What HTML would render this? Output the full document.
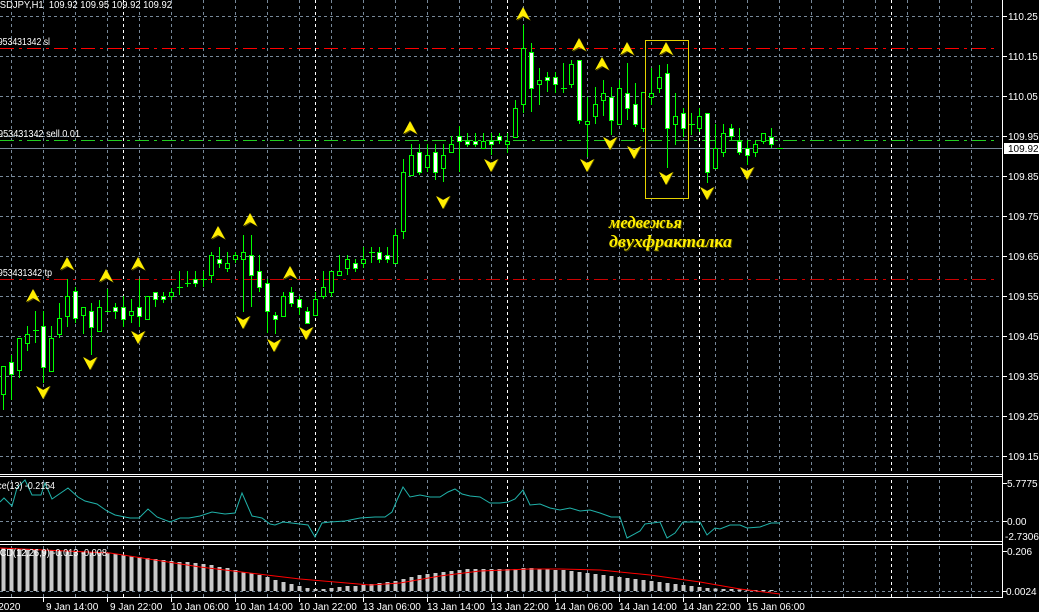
<!DOCTYPE html>
<html><head><meta charset="utf-8"><style>
html,body{margin:0;padding:0;background:#000;width:1039px;height:612px;overflow:hidden}
svg{display:block}
.t{font-family:"Liberation Sans",sans-serif;font-size:10px;fill:#fff}
.h{fill:#000;stroke:#00ff00}
.w{fill:#fff;stroke:#00ff00}
</style></head><body>
<svg width="1039" height="612" viewBox="0 0 1039 612" xmlns="http://www.w3.org/2000/svg">
<defs>
<g id="up"><path d="M1 1L8 14L1 10L-6 14Z" fill="#5a5000"/><path d="M0 0L7 13L0 9L-7 13Z" fill="#ffee00"/></g>
<g id="dn"><path d="M1 13L8 0L1 4L-6 0Z" fill="#5a5000"/><path d="M0 13L7 0L0 4L-7 0Z" fill="#ffee00"/></g>
</defs>
<path d="M11.5 0V597M43.5 0V597M75.5 0V597M107.5 0V597M139.5 0V597M171.5 0V597M203.5 0V597M235.5 0V597M267.5 0V597M299.5 0V597M331.5 0V597M363.5 0V597M395.5 0V597M427.5 0V597M459.5 0V597M491.5 0V597M523.5 0V597M555.5 0V597M587.5 0V597M619.5 0V597M651.5 0V597M683.5 0V597M715.5 0V597M747.5 0V597M779.5 0V597M811.5 0V597M843.5 0V597M875.5 0V597M907.5 0V597M939.5 0V597M971.5 0V597" stroke="#778899" stroke-dasharray="3 3"/>
<path d="M0 16.5H1002M0 56.5H1002M0 96.5H1002M0 136.5H1002M0 176.5H1002M0 216.5H1002M0 256.5H1002M0 296.5H1002M0 336.5H1002M0 376.5H1002M0 416.5H1002M0 456.5H1002M0 521.5H1002M0 591.5H1002" stroke="#778899" stroke-dasharray="3 3"/>
<path d="M123.5 0V597M315.5 0V597M507.5 0V597M699.5 0V597M891.5 0V597" stroke="#fff" stroke-dasharray="3 3"/>
<rect x="0" y="473" width="1003" height="5" fill="#000"/>
<rect x="0" y="541" width="1003" height="4" fill="#000"/>
<path d="M0 474.5H1003M0 476.5H1003M0 541.5H1003M0 544.5H1003M0 597.5H1003M1002.5 0V598" stroke="#fff"/>
<path d="M0 48.5H996" stroke="#ff0000" stroke-dasharray="14 5 3 5"/>
<path d="M0 140.5H996" stroke="#22cc22" stroke-dasharray="14 5 3 5"/>
<path d="M0 279.5H996" stroke="#cc0000" stroke-dasharray="14 5 3 5"/>
<path d="M0 148.5H1002" stroke="#778899"/>
<path stroke="#00ff00" d="M3.5 366V410M11.5 355V400M19.5 338V378M27.5 326V351M35.5 311V343M43.5 311V383M51.5 326V371M59.5 303V338M67.5 279V327M75.5 287V323M83.5 307V334M91.5 303V355M99.5 300V331M107.5 289V311M115.5 303V319M123.5 296V327M131.5 299V323M139.5 279V327M147.5 296V319M155.5 292V307M163.5 292V303M171.5 288V300M179.5 271V295M187.5 271V287M195.5 271V287M203.5 271V287M211.5 252V283M219.5 247V268M227.5 252V272M235.5 252V263M243.5 235V312M251.5 235V307M259.5 255V292M267.5 279V333M275.5 312V334M283.5 292V316M291.5 287V307M299.5 296V315M307.5 307V323M315.5 292V315M323.5 271V299M331.5 271V297M339.5 255V275M347.5 255V275M355.5 259V272M363.5 247V268M371.5 247V263M379.5 247V263M387.5 247V263M395.5 229V263M403.5 159V239M411.5 144V175M419.5 144V175M427.5 144V172M435.5 144V180M443.5 144V182M451.5 136V147M459.5 126V172M467.5 133V147M475.5 133V147M483.5 133V148M491.5 133V155M499.5 133V144M507.5 133V153M515.5 100V137M523.5 25V113M531.5 43V112M539.5 68V105M547.5 72V92M555.5 72V93M563.5 63V93M571.5 60V88M579.5 60V124M587.5 97V157M595.5 87V124M603.5 80V116M611.5 87V135M619.5 80V124M627.5 63V120M635.5 83V127M643.5 92V132M651.5 68V105M659.5 65V93M667.5 64V168M675.5 93V145M683.5 108V137M691.5 113V135M699.5 108V132M707.5 113V183M715.5 124V168M723.5 124V157M731.5 124V140M739.5 128V155M747.5 140V165M755.5 140V157M763.5 133V144M771.5 128V148"/>
<path stroke="#00ff00" d="M33 330.5h6M105 311.5h6M177 287.5h6M185 283.5h6M201 279.5h6M369 252.5h6M561 88.5h6M689 124.5h6M777 148.5h6"/>
<g stroke-width="1">
<rect x="1.5" y="366.5" width="4" height="28" class="h"/><rect x="9.5" y="362.5" width="4" height="12" class="w"/><rect x="17.5" y="338.5" width="4" height="32" class="h"/><rect x="25.5" y="334.5" width="4" height="9" class="h"/><rect x="41.5" y="326.5" width="4" height="41" class="w"/><rect x="49.5" y="338.5" width="4" height="33" class="h"/><rect x="57.5" y="318.5" width="4" height="16" class="h"/><rect x="65.5" y="296.5" width="4" height="20" class="h"/><rect x="73.5" y="291.5" width="4" height="27" class="w"/><rect x="81.5" y="307.5" width="4" height="8" class="h"/><rect x="89.5" y="311.5" width="4" height="16" class="w"/><rect x="97.5" y="307.5" width="4" height="24" class="h"/><rect x="113.5" y="307.5" width="4" height="4" class="w"/><rect x="121.5" y="307.5" width="4" height="12" class="w"/><rect x="129.5" y="311.5" width="4" height="4" class="h"/><rect x="137.5" y="307.5" width="4" height="9" class="w"/><rect x="145.5" y="296.5" width="4" height="23" class="h"/><rect x="153.5" y="292.5" width="4" height="7" class="w"/><rect x="161.5" y="296.5" width="4" height="3" class="w"/><rect x="169.5" y="292.5" width="4" height="4" class="h"/><rect x="193.5" y="279.5" width="4" height="4" class="w"/><rect x="209.5" y="255.5" width="4" height="20" class="h"/><rect x="217.5" y="259.5" width="4" height="4" class="w"/><rect x="225.5" y="263.5" width="4" height="5" class="h"/><rect x="233.5" y="255.5" width="4" height="4" class="h"/><rect x="241.5" y="252.5" width="4" height="7" class="h"/><rect x="249.5" y="255.5" width="4" height="20" class="w"/><rect x="257.5" y="271.5" width="4" height="16" class="w"/><rect x="265.5" y="283.5" width="4" height="28" class="w"/><rect x="273.5" y="315.5" width="4" height="4" class="w"/><rect x="281.5" y="296.5" width="4" height="20" class="h"/><rect x="289.5" y="292.5" width="4" height="11" class="w"/><rect x="297.5" y="299.5" width="4" height="8" class="w"/><rect x="305.5" y="311.5" width="4" height="12" class="w"/><rect x="313.5" y="299.5" width="4" height="16" class="h"/><rect x="321.5" y="287.5" width="4" height="9" class="h"/><rect x="329.5" y="271.5" width="4" height="21" class="h"/><rect x="337.5" y="271.5" width="4" height="4" class="h"/><rect x="345.5" y="259.5" width="4" height="9" class="h"/><rect x="353.5" y="263.5" width="4" height="5" class="w"/><rect x="361.5" y="259.5" width="4" height="4" class="h"/><rect x="377.5" y="252.5" width="4" height="7" class="w"/><rect x="385.5" y="255.5" width="4" height="4" class="w"/><rect x="393.5" y="235.5" width="4" height="28" class="h"/><rect x="401.5" y="172.5" width="4" height="59" class="h"/><rect x="409.5" y="155.5" width="4" height="20" class="h"/><rect x="417.5" y="152.5" width="4" height="20" class="w"/><rect x="425.5" y="155.5" width="4" height="12" class="h"/><rect x="433.5" y="152.5" width="4" height="20" class="w"/><rect x="441.5" y="155.5" width="4" height="13" class="h"/><rect x="449.5" y="144.5" width="4" height="8" class="h"/><rect x="457.5" y="136.5" width="4" height="5" class="w"/><rect x="465.5" y="141.5" width="4" height="3" class="w"/><rect x="473.5" y="141.5" width="4" height="3" class="w"/><rect x="481.5" y="141.5" width="4" height="7" class="h"/><rect x="489.5" y="141.5" width="4" height="3" class="w"/><rect x="497.5" y="136.5" width="4" height="4" class="w"/><rect x="505.5" y="141.5" width="4" height="3" class="h"/><rect x="513.5" y="108.5" width="4" height="29" class="h"/><rect x="521.5" y="48.5" width="4" height="56" class="h"/><rect x="529.5" y="52.5" width="4" height="36" class="w"/><rect x="537.5" y="80.5" width="4" height="4" class="h"/><rect x="545.5" y="77.5" width="4" height="3" class="w"/><rect x="553.5" y="77.5" width="4" height="7" class="w"/><rect x="569.5" y="64.5" width="4" height="20" class="h"/><rect x="577.5" y="60.5" width="4" height="60" class="w"/><rect x="585.5" y="121.5" width="4" height="3" class="h"/><rect x="593.5" y="104.5" width="4" height="12" class="h"/><rect x="601.5" y="93.5" width="4" height="7" class="h"/><rect x="609.5" y="97.5" width="4" height="23" class="w"/><rect x="617.5" y="88.5" width="4" height="36" class="h"/><rect x="625.5" y="93.5" width="4" height="15" class="w"/><rect x="633.5" y="104.5" width="4" height="20" class="w"/><rect x="641.5" y="92.5" width="4" height="36" class="h"/><rect x="649.5" y="93.5" width="4" height="4" class="h"/><rect x="657.5" y="77.5" width="4" height="11" class="h"/><rect x="665.5" y="73.5" width="4" height="55" class="w"/><rect x="673.5" y="116.5" width="4" height="8" class="h"/><rect x="681.5" y="113.5" width="4" height="15" class="w"/><rect x="697.5" y="116.5" width="4" height="12" class="h"/><rect x="705.5" y="113.5" width="4" height="59" class="w"/><rect x="713.5" y="148.5" width="4" height="20" class="h"/><rect x="721.5" y="133.5" width="4" height="19" class="h"/><rect x="729.5" y="128.5" width="4" height="8" class="w"/><rect x="737.5" y="141.5" width="4" height="11" class="w"/><rect x="745.5" y="148.5" width="4" height="7" class="w"/><rect x="753.5" y="144.5" width="4" height="8" class="h"/><rect x="761.5" y="133.5" width="4" height="8" class="h"/><rect x="769.5" y="137.5" width="4" height="7" class="w"/>
</g>
<use href="#up" x="33" y="289"/><use href="#up" x="67" y="257"/><use href="#up" x="106" y="269"/><use href="#up" x="138" y="257"/><use href="#up" x="218" y="226"/><use href="#up" x="250" y="213"/><use href="#up" x="290" y="266"/><use href="#up" x="410" y="121"/><use href="#up" x="523" y="7"/><use href="#up" x="579" y="38"/><use href="#up" x="602" y="57"/><use href="#up" x="627" y="42"/><use href="#up" x="666" y="42"/>
<use href="#dn" x="43" y="386"/><use href="#dn" x="90" y="357"/><use href="#dn" x="138" y="331"/><use href="#dn" x="243" y="316"/><use href="#dn" x="274" y="339"/><use href="#dn" x="306" y="327"/><use href="#dn" x="443" y="196"/><use href="#dn" x="491" y="159"/><use href="#dn" x="587" y="159"/><use href="#dn" x="610" y="137"/><use href="#dn" x="634" y="146"/><use href="#dn" x="666" y="172"/><use href="#dn" x="707" y="187"/><use href="#dn" x="747" y="167"/>
<rect x="645.5" y="40.5" width="43" height="158" fill="none" stroke="#e6d200"/>
<g font-family="Liberation Serif,serif" font-style="italic" font-weight="bold" font-size="17">
<text x="610" y="229" fill="#444000" textLength="73" lengthAdjust="spacingAndGlyphs">медвежья</text>
<text x="609" y="228" fill="#ffee00" textLength="73" lengthAdjust="spacingAndGlyphs">медвежья</text>
<text x="610" y="248" fill="#444000" textLength="123" lengthAdjust="spacingAndGlyphs">двухфракталка</text>
<text x="609" y="247" fill="#ffee00" textLength="123" lengthAdjust="spacingAndGlyphs">двухфракталка</text>
</g>
<text class="t" x="-7" y="8" textLength="179" lengthAdjust="spacingAndGlyphs">USDJPY,H1&#160;&#160;109.92 109.95 109.92 109.92</text>
<text class="t" x="-7" y="45" textLength="57" lengthAdjust="spacingAndGlyphs">#953431342 sl</text>
<text class="t" x="-7" y="137" textLength="87" lengthAdjust="spacingAndGlyphs">#953431342 sell 0.01</text>
<text class="t" x="-7" y="276" textLength="59" lengthAdjust="spacingAndGlyphs">#953431342 tp</text>
<g class="t">
<text class="t" x="1008" y="20">110.25</text><text class="t" x="1008" y="60">110.15</text><text class="t" x="1008" y="100">110.05</text><text class="t" x="1008" y="140">109.95</text><text class="t" x="1008" y="180">109.85</text><text class="t" x="1008" y="220">109.75</text><text class="t" x="1008" y="260">109.65</text><text class="t" x="1008" y="300">109.55</text><text class="t" x="1008" y="340">109.45</text><text class="t" x="1008" y="380">109.35</text><text class="t" x="1008" y="420">109.25</text><text class="t" x="1008" y="460">109.15</text>
</g>
<path d="M1003 16.5h4M1003 56.5h4M1003 96.5h4M1003 136.5h4M1003 176.5h4M1003 216.5h4M1003 256.5h4M1003 296.5h4M1003 336.5h4M1003 376.5h4M1003 416.5h4M1003 456.5h4M1003 483.5h4M1003 521.5h4M1003 551.5h4M1003 591.5h4" stroke="#fff"/>
<rect x="1004" y="143" width="35" height="11" fill="#fff"/>
<text x="1008" y="152" font-family="Liberation Sans,sans-serif" font-size="10" fill="#000">109.92</text>
<polyline fill="none" stroke="#20b2aa" points="0,502 4,498 12,506 17,488 25,480 32,495 41,495 45,483 52,499 68,488 78,497 85,501 97,504 107,511 115,515 130,518 139,518 148,509 157,517 170,522 180,518 189,518 200,516 212,512 225,514 235,513 242,493 252,516 262,518 270,524 275,525 283,522 300,524 308,525 315,537 322,523 330,522 345,521 360,518 375,517 385,517 392,512 397,500 403,487 410,497 420,495 430,497 440,497 448,492 455,489 462,494 470,496 480,497 490,503 500,503 508,502 515,499 523,490 530,505 540,504 550,508 560,510 570,508 580,511 590,510 600,513 611,517 620,517 627,538 640,531 645,524 660,522 667,538 675,533 683,522 700,522 707,535 715,528 720,529 730,525 740,525 747,528 760,527 771,523 780,523"/>
<text class="t" x="-16" y="489" textLength="71" lengthAdjust="spacingAndGlyphs">Force(13) -0.2154</text>
<text class="t" x="1007" y="487">5.7775</text><text class="t" x="1007" y="525">0.00</text><text class="t" x="1005" y="540">-2.7306</text>
<path stroke="#c8c8c8" stroke-width="4" d="M3.5 591V548M11.5 591V548M19.5 591V549M27.5 591V549M35.5 591V550M43.5 591V550M51.5 591V550M59.5 591V551M67.5 591V551M75.5 591V551M83.5 591V552M91.5 591V552M99.5 591V552M107.5 591V553M115.5 591V554M123.5 591V555M131.5 591V556M139.5 591V557M147.5 591V558M155.5 591V559M163.5 591V560M171.5 591V561M179.5 591V562M187.5 591V562M195.5 591V563M203.5 591V564M211.5 591V565M219.5 591V567M227.5 591V568M235.5 591V570M243.5 591V572M251.5 591V573M259.5 591V575M267.5 591V577M275.5 591V580M283.5 591V582M291.5 591V584M299.5 591V586M307.5 591V588M315.5 591V589M323.5 591V589M331.5 591V588M339.5 591V587M347.5 591V586M355.5 591V586M363.5 591V585M371.5 591V584M379.5 591V583M387.5 591V582M395.5 591V581M403.5 591V579M411.5 591V577M419.5 591V575M427.5 591V574M435.5 591V573M443.5 591V572M451.5 591V571M459.5 591V570M467.5 591V569M475.5 591V569M483.5 591V569M491.5 591V569M499.5 591V569M507.5 591V569M515.5 591V569M523.5 591V568M531.5 591V568M539.5 591V569M547.5 591V569M555.5 591V570M563.5 591V570M571.5 591V571M579.5 591V572M587.5 591V573M595.5 591V574M603.5 591V575M611.5 591V576M619.5 591V577M627.5 591V578M635.5 591V579M643.5 591V580M651.5 591V581M659.5 591V582M667.5 591V583M675.5 591V584M683.5 591V585M691.5 591V586M699.5 591V587M707.5 591V588M715.5 591V588.5M723.5 591V589M731.5 591V589M739.5 591V589.5M747.5 591V589.5M755.5 591V590M763.5 591V590M771.5 591V590"/>
<polyline fill="none" stroke="#ff0000" points="0,548 110,553 200,567 300,579 370,585 400,583 440,576 480,571 530,569 560,569 600,570 650,575 700,582 740,589 780,594"/>
<text class="t" x="-14" y="556" textLength="121" lengthAdjust="spacingAndGlyphs">MACD(12,26,9) -0.013 -0.008</text>
<text class="t" x="1007" y="555">0.206</text><text class="t" x="1006" y="595">0.0024</text>
<path d="M43.5 598v4M107.5 598v4M171.5 598v4M235.5 598v4M299.5 598v4M363.5 598v4M427.5 598v4M491.5 598v4M555.5 598v4M619.5 598v4M683.5 598v4M747.5 598v4" stroke="#fff"/>
<g class="t">
<text class="t" x="-29" y="610">8 Jan 2020</text>
<text class="t" x="46" y="610">9 Jan 14:00</text>
<text class="t" x="110" y="610">9 Jan 22:00</text>
<text class="t" x="171" y="610">10 Jan 06:00</text>
<text class="t" x="235" y="610">10 Jan 14:00</text>
<text class="t" x="299" y="610">10 Jan 22:00</text>
<text class="t" x="363" y="610">13 Jan 06:00</text>
<text class="t" x="427" y="610">13 Jan 14:00</text>
<text class="t" x="491" y="610">13 Jan 22:00</text>
<text class="t" x="555" y="610">14 Jan 06:00</text>
<text class="t" x="619" y="610">14 Jan 14:00</text>
<text class="t" x="683" y="610">14 Jan 22:00</text>
<text class="t" x="747" y="610">15 Jan 06:00</text>
</g>
</svg>
</body></html>
